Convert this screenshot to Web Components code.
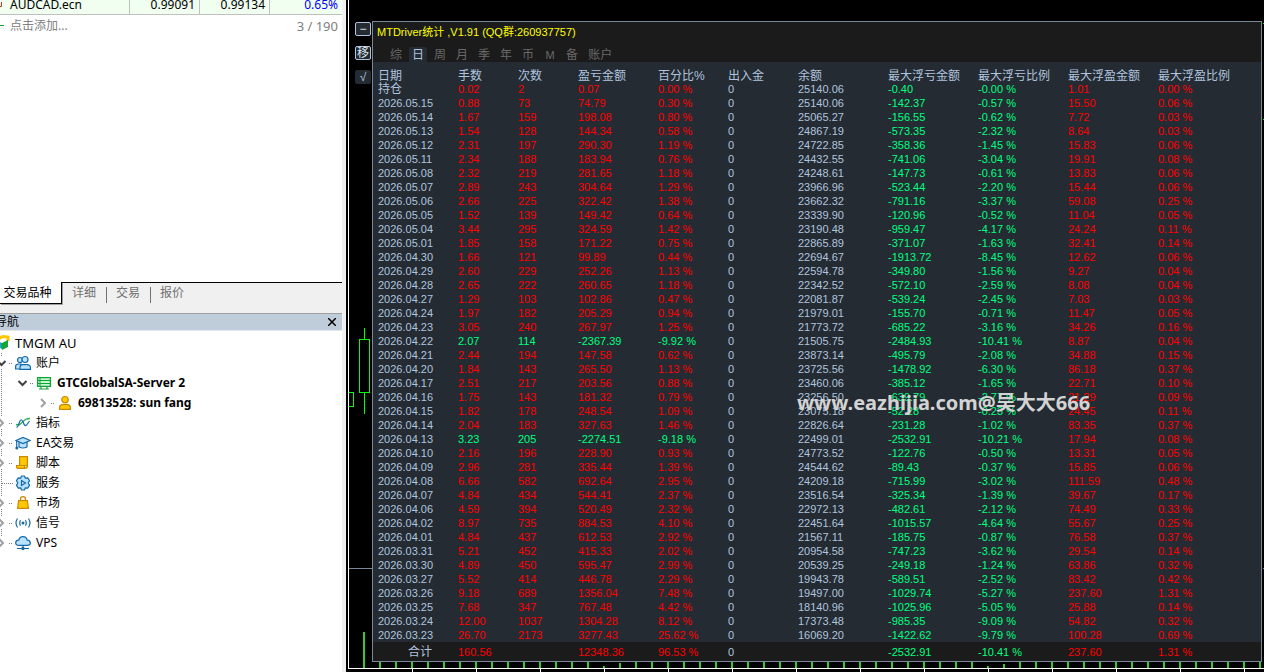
<!DOCTYPE html>
<html lang="zh-CN">
<head>
<meta charset="utf-8">
<title>MTDriver统计</title>
<style>
  html, body { margin: 0; height: 100%; background: #000; }
  body { font: 12px/20px "Noto Sans", "Noto Sans CJK SC", sans-serif; color: #000; }
</style>
</head>
<body>
<trade-terminal></trade-terminal>

<template id="t-terminal">
  <style>
    :host { display: flex; min-height: 100vh; overflow: hidden; }
    side-dock { flex: 0 0 346px; }
    chart-area { flex: 1; min-width: 0; margin-left: 2px; }
  </style>
  <side-dock></side-dock>
  <chart-area></chart-area>
</template>

<template id="t-dock">
  <style>
    :host { display: flex; flex-direction: column; box-sizing: border-box; padding-right: 4px; background: #f0f0f0; }
    market-watch { flex: 0 0 282px; }
    dock-tabs { flex: none; }
    nav-tree { flex: 1; }
  </style>
  <market-watch></market-watch>
  <dock-tabs></dock-tabs>
  <nav-tree></nav-tree>
</template>

<template id="t-market">
  <style>
    :host { display: block; background: #fff; overflow: hidden; }
    table { width: 100%; border-collapse: separate; border-spacing: 0; table-layout: fixed; background: #f0fff0; }
    td { height: 15px; padding: 0 4px 4px; box-sizing: border-box; line-height: 10px; text-align: right; border-bottom: 1px solid #c0c0c0; border-right: 1px solid #c0c0c0; }
    td:first-child { text-align: left; width: 130px; padding-left: 0; }
    td:nth-child(2), td:nth-child(3) { width: 70px; }
    td:last-child { border-right: 0; color: #00f; }
    td svg { display: inline-block; width: 10px; height: 10px; vertical-align: top; }
    .add { display: flex; justify-content: space-between; padding: 0 4px 0 0; height: 22px; align-items: center; color: #808080; }
    .add span { font-size: 13px; }
    button { all: unset; display: flex; align-items: center; cursor: pointer; }
    button svg { width: 10px; height: 10px; }
  </style>
  <table><tbody><tr>
    <td><svg viewBox="0 0 10 10"><path d="M1.500 2V6.500H0" fill="none" stroke="#d03020" stroke-width="1"/></svg>AUDCAD.ecn</td>
    <td>0.99091</td><td>0.99134</td><td>0.65%</td>
  </tr></tbody></table>
  <div class="add">
    <button type="button"><svg viewBox="0 0 10 10" aria-hidden="true"><path d="M0 4.500H4" stroke="#18a030"/></svg>点击添加...</button>
    <span>3 / 190</span>
  </div>
</template>

<template id="t-tabs">
  <style>
    :host { display: block; height: 31px; }
    nav { display: flex; }
    button { font: inherit; margin: 0; border: 0; padding: 0 0 2px; background: none; color: #707070; height: 22px; line-height: 18px; box-sizing: border-box; border-top: 1px solid #000; width: 44px; position: relative; }
    button[aria-selected="true"] { width: 62px; color: #000; background: #fff; border: solid #000; border-width: 0 1px 1px 0; box-shadow: 1px 1px 0 #a0a0a0; padding: 0 6px 0 0; }
    button + button + button::before { content: ""; position: absolute; left: 0; top: 4px; height: 16px; border-left: 1px solid #707070; }
    i { flex: 1; border-top: 1px solid #000; }
  </style>
  <nav role="tablist">
    <button role="tab" aria-selected="true">交易品种</button><button role="tab">详细</button><button role="tab">交易</button><button role="tab">报价</button><i></i>
  </nav>
</template>

<template id="t-nav">
  <style>
    :host { display: block; background: #fff; overflow: hidden; }
    header { display: flex; justify-content: space-between; align-items: center; height: 16px; border-top: 1px solid #a0a0a0; border-bottom: 1px solid #e4e8ec; background: #bfcddb; }
    h2 { margin: 0 0 0 -5px; font: inherit; line-height: 16px; }
    button { all: unset; display: flex; padding: 0 6px; cursor: pointer; }
    button svg { width: 8px; height: 8px; }
    ul { list-style: none; margin: 0 0 0 -6px; padding: 0; }
    .root { padding-top: 2px; }
    .tree { background: repeating-linear-gradient(#808080 0 1px, transparent 1px 2px) 7px 0 / 1px 190px no-repeat; }
  </style>
  <header><h2>导航</h2><button type="button" aria-label="关闭"><svg viewBox="0 0 8 8"><path d="M0 0L8 8M8 0L0 8" stroke="#000" stroke-width="1.500"/></svg></button></header>
  <ul class="root"><tree-item root icon="brand">TMGM AU</tree-item></ul>
  <ul class="tree">
    <tree-item icon="users" open>账户</tree-item>
    <tree-item icon="server" level="2" open strong>GTCGlobalSA-Server 2</tree-item>
    <tree-item icon="user" level="3" strong>69813528: sun fang</tree-item>
    <tree-item icon="wave">指标</tree-item>
    <tree-item icon="cap">EA交易</tree-item>
    <tree-item icon="script">脚本</tree-item>
    <tree-item icon="gear" leaf>服务</tree-item>
    <tree-item icon="bag">市场</tree-item>
    <tree-item icon="signal">信号</tree-item>
    <tree-item icon="cloud">VPS</tree-item>
  </ul>
</template>

<template id="t-item">
  <style>
    :host { display: flex; align-items: center; height: 20px; white-space: nowrap; }
    :host([level="2"]) { padding-left: 21px; }
    :host([level="3"]) { padding-left: 42px; }
    :host([strong]) { font-weight: bold; }
    :host([root]) { font-size: 13px; }
    .toggle { width: 15px; height: 12px; }
    .dots { width: 4px; height: 1px; margin-right: 2px; background: repeating-linear-gradient(90deg, #808080 0 1px, transparent 1px 2px); }
    .icon { width: 16px; height: 16px; margin-right: 5px; }
    :host([root]) .toggle, :host([root]) .dots { display: none; }
    :host([leaf]) .toggle { visibility: hidden; }
    :host([leaf]) .dots { width: 11px; margin-left: -7px; }
  </style>
  <svg class="toggle" viewBox="0 0 15 12"></svg><span class="dots"></span><svg class="icon" viewBox="0 0 16 16" fill="none"></svg><span><slot></slot></span>
</template>

<template id="t-chart">
  <style>
    :host { display: flex; flex-direction: column; position: relative; box-sizing: border-box; padding: 21px 2px 0 0; background: #000; }
    .axis { position: absolute; left: 0; top: 0; bottom: 3px; border-left: 1px solid #fff; }
    .main { display: flex; flex: 1; }
    .rail { flex: 0 0 24px; display: flex; flex-direction: column; align-items: flex-end; gap: 10px; padding: 1px 0 0; box-sizing: border-box; }
    .rail button { width: 16px; height: 14px; box-sizing: border-box; margin: 0 1px 0 0; padding: 0; border: 1px solid #b0c4de; border-radius: 2px; background: #242b33; color: #dde6f0; font: 12px/10px "Liberation Sans", "Noto Sans CJK SC", sans-serif; }
    .rail button.flat { border-color: #242b33; color: #b0c4de; }
    .candles { position: absolute; left: 0; top: 0; width: 24px; height: 668px; }
    .right { position: absolute; right: 0; top: 0; width: 1px; height: 668px; }
    .strip { display: block; width: 100%; height: 10px; }
    .bottom { margin: 0 -2px 0 0; }
    stats-panel { flex: 1; min-width: 0; }
  </style>
  <span class="axis"></span>
  <svg class="candles" viewBox="0 0 24 668" shape-rendering="crispEdges" aria-hidden="true">
    <path d="M16.500 328V339M16.500 393V414M11.500 339.500H21.500V392.500H11.500ZM1 392.500H5.500V406.500H1" fill="none" stroke="#0f0"/>
    <rect x="1" y="568" width="23" height="1" fill="#778899"/>
    <rect x="15" y="632" width="2" height="36" fill="#32cd32"/>
  </svg>
  <svg class="right" viewBox="0 0 1 668" shape-rendering="crispEdges" aria-hidden="true"><path d="M0 23.500H1M0 119.500H1" stroke="#0f0"/><path d="M0 568.500H1" stroke="#778899"/></svg>
  <div class="main">
    <div class="rail"><button type="button">−</button><button type="button">移</button><button type="button" class="flat">√</button></div>
    <stats-panel></stats-panel>
  </div>
  <div class="bottom">
    <svg class="strip" shape-rendering="crispEdges" aria-hidden="true">
      <defs>
        <pattern id="bars" width="16" height="10" patternUnits="userSpaceOnUse"><rect x="15" width="1" height="6" fill="#32cd32"/><rect x="0" width="1" height="6" fill="#32cd32"/></pattern>
        <pattern id="ticks" width="64" height="10" patternUnits="userSpaceOnUse"><rect x="0" y="7" width="1" height="3" fill="#fff"/></pattern>
      </defs>
      <rect x="15" width="100%" height="6" fill="url(#bars)"/>
      <path d="M255 0h2v4h-2zM271 0h2v1h-2zM639 0h2v4h-2zM655 0h2v2h-2z" fill="#000"/>
      <rect y="6" width="100%" height="1" fill="#fff"/>
      <rect x="1" y="0" width="100%" height="10" fill="url(#ticks)"/>
    </svg>
  </div>
</template>

<template id="t-panel">
  <style>
    :host { display: flex; flex-direction: column; position: relative; box-sizing: border-box; border: 1px solid #778899; background: #242b33; font-family: "Liberation Sans", "Noto Sans CJK SC", sans-serif; font-size: 11px; }
    header { background: #1b1b1b; height: 40px; }
    h1 { margin: 0 0 5px; padding-left: 4px; font: inherit; line-height: 20px; color: #ff0; }
    nav { display: flex; gap: 4px; padding-left: 14px; }
    nav button { min-width: 18px; height: 15px; box-sizing: border-box; padding: 2px 3px 0; border: 0; margin: 0; background: none; color: #696969; font: 12px/13px "Liberation Sans", "Noto Sans CJK SC", sans-serif; white-space: nowrap; border-radius: 2px 2px 0 0; }
    nav button[aria-selected="true"] { background: #242b33; color: #b0c4de; }
    nav button.latin { font-size: 11px; }
    .mark { position: absolute; left: 424px; top: 368px; font: bold 20px/26px "Noto Sans", "Noto Sans CJK SC", sans-serif; color: #d3d3d3; white-space: nowrap; pointer-events: none; }
  </style>
  <header>
    <h1>MTDriver统计 ,V1.91 (QQ群:260937757)</h1>
    <nav role="tablist"><button role="tab">综</button><button role="tab" aria-selected="true">日</button><button role="tab">周</button><button role="tab">月</button><button role="tab">季</button><button role="tab">年</button><button role="tab">币</button><button role="tab" class="latin">M</button><button role="tab">备</button><button role="tab">账户</button></nav>
  </header>
  <stats-table></stats-table>
  <div class="mark">www.eazhijia.com@吴大大666</div>
</template>

<template id="t-table">
  <style>
    :host { display: block; color: #b0c4de; }
    table { width: 100%; border-collapse: collapse; table-layout: fixed; line-height: 14px; }
    th, td { padding: 0 0 0 5px; text-align: left; font-weight: normal; white-space: nowrap; height: 14px; box-sizing: border-box; }
    thead th { height: 20px; vertical-align: bottom; font-size: 12px; line-height: 12px; }
    th.cjk { font-size: 12px; }
    tfoot tr { background: #1b1b1b; }
    tfoot th, tfoot td { height: 19px; }
    tfoot th { padding-left: 35px; }
    .up { color: #f00; }
    .down { color: #00ff7f; }
    .w60 { width: 60px; } .w70 { width: 70px; } .w80 { width: 80px; } .w90 { width: 90px; }
  </style>
  <table>
    <colgroup><col class="w80"><col class="w60"><col class="w60"><col class="w80"><col class="w70"><col class="w70"><col class="w90"><col class="w90"><col class="w90"><col class="w90"><col></colgroup>
    <thead><tr></tr></thead><tbody></tbody><tfoot></tfoot>
  </table>
</template>

<script>
const ICONS = {
  brand: '<path d="M2 5L9 1.500L14 2V6" stroke="#ffc800" stroke-width="3"/><path d="M4 6L8 8V14L4 12Z" fill="#2b9fe0"/><path d="M7 8.500L14 5V12L8 15Z" fill="#10a838"/>',
  users: '<g fill="#b9e2ff" stroke="#1569a8" stroke-width="1.200"><circle cx="5" cy="5" r="2.500"/><path d="M.600 14V11.500Q.600 9 3.500 9H6V14Z"/><circle cx="10" cy="4.500" r="3"/><path d="M5 14.400V12.500Q5 9.600 8 9.600H12Q15.400 9.600 15.400 12.500V14.400Z"/></g>',
  server: '<path d="M1.600 2.600H14.400V11.400H1.600Z" fill="#c9f7d2" stroke="#12a336" stroke-width="1.300"/><path d="M2 5.500H14M2 8.500H14M3 14H13M5 11V14M11 11V14" stroke="#12a336" stroke-width="1.200"/><path d="M3 4H5M3 7H5M3 10H5" stroke="#12a336"/>',
  user: '<g fill="#ffc800" stroke="#c98a00" stroke-width="1.200"><circle cx="8" cy="4.700" r="3.200"/><path d="M2.600 14.400V12.500Q2.600 9.600 5.500 9.600H10.500Q13.400 9.600 13.400 12.500V14.400Z"/></g>',
  wave: '<path d="M1 9.500L4 10L11 4L15 3.500" stroke="#25b04a" stroke-width="1.300"/><path d="M1.500 12.500Q3 12 4.500 7Q6 2.500 8 7Q10 12.500 12 9.500L14.500 6" stroke="#1569a8" stroke-width="1.200"/>',
  cap: '<g stroke="#1569a8" stroke-width="1.200"><path d="M4 7V12Q8 14 12 12V7" fill="#b9e2ff"/><path d="M1 5.500L8 2.500L15 5.500L8 8.500Z" fill="#b9e2ff"/><path d="M1.700 6V12"/></g><circle cx="1.800" cy="13" r="1.500" fill="#1569a8"/>',
  script: '<path d="M4.600 1.600H12.400V10.500H4.600Z" fill="#ffc800" stroke="#c98a00" stroke-width="1.200"/><path d="M1.600 10.500H9.500V13.400H3Q1.600 13.400 1.600 12.200ZM9.500 13.400Q12.400 13.400 12.400 11.500V9" fill="#ffc800" stroke="#c98a00" stroke-width="1.200"/>',
  gear: '<path d="M6.500 1H9.500L10.300 3.200L12.700 2.900L14.500 5.600L13.200 8L14.500 10.400L12.700 13.100L10.300 12.800L9.500 15H6.500L5.700 12.800L3.300 13.100L1.500 10.400L2.800 8L1.500 5.600L3.300 2.900L5.700 3.200Z" fill="#b9e2ff" stroke="#1569a8" stroke-width="1.200" stroke-linejoin="round"/><path d="M6.500 5.500L10.500 8L6.500 10.500Z" fill="#b9e2ff" stroke="#1569a8" stroke-width="1.200"/>',
  bag: '<path d="M5.500 6V4Q5.500 1.600 8 1.600T10.500 4V6" stroke="#c98a00" stroke-width="1.400"/><path d="M3.600 5.600H12.400L13.400 13.400H2.600Z" fill="#ffc800" stroke="#c98a00" stroke-width="1.200"/>',
  signal: '<circle cx="8" cy="8" r="1.500" fill="#1569a8"/><path d="M5.500 5.200Q4 8 5.500 10.800M10.500 5.200Q12 8 10.500 10.800M2.500 3.500Q-.500 8 2.500 12.500M13.500 3.500Q16.500 8 13.500 12.500" stroke="#1569a8" stroke-width="1.200"/>',
  cloud: '<path d="M4 10.400Q.700 10.400 .700 7.800T3.800 5.200Q4.500 1.600 8 1.600T12.200 5.200Q15.300 5.300 15.300 7.900T12 10.400Z" fill="#b9e2ff" stroke="#1569a8" stroke-width="1.200"/><path d="M8 10.500V13M2 13.500H14" stroke="#1569a8" stroke-width="1.200"/><circle cx="8" cy="13.500" r="1.700" fill="#1569a8"/>'
};

const HEAD = ['日期','手数','次数','盈亏金额','百分比%','出入金','余额','最大浮亏金额','最大浮亏比例','最大浮盈金额','最大浮盈比例'];
/* date | lots | trades | profit | percent | balance | max loss | loss ratio | max gain | gain ratio */
const DATA = `持仓|0.02|2|0.07|0.00|25140.06|-0.40|-0.00|1.01|0.00
2026.05.15|0.88|73|74.79|0.30|25140.06|-142.37|-0.57|15.50|0.06
2026.05.14|1.67|159|198.08|0.80|25065.27|-156.55|-0.62|7.72|0.03
2026.05.13|1.54|128|144.34|0.58|24867.19|-573.35|-2.32|8.64|0.03
2026.05.12|2.31|197|290.30|1.19|24722.85|-358.36|-1.45|15.83|0.06
2026.05.11|2.34|188|183.94|0.76|24432.55|-741.06|-3.04|19.91|0.08
2026.05.08|2.32|219|281.65|1.18|24248.61|-147.73|-0.61|13.83|0.06
2026.05.07|2.89|243|304.64|1.29|23966.96|-523.44|-2.20|15.44|0.06
2026.05.06|2.66|225|322.42|1.38|23662.32|-791.16|-3.37|59.08|0.25
2026.05.05|1.52|139|149.42|0.64|23339.90|-120.96|-0.52|11.04|0.05
2026.05.04|3.44|295|324.59|1.42|23190.48|-959.47|-4.17|24.24|0.11
2026.05.01|1.85|158|171.22|0.75|22865.89|-371.07|-1.63|32.41|0.14
2026.04.30|1.66|121|99.89|0.44|22694.67|-1913.72|-8.45|12.62|0.06
2026.04.29|2.60|229|252.26|1.13|22594.78|-349.80|-1.56|9.27|0.04
2026.04.28|2.65|222|260.65|1.18|22342.52|-572.10|-2.59|8.08|0.04
2026.04.27|1.29|103|102.86|0.47|22081.87|-539.24|-2.45|7.03|0.03
2026.04.24|1.97|182|205.29|0.94|21979.01|-155.70|-0.71|11.47|0.05
2026.04.23|3.05|240|267.97|1.25|21773.72|-685.22|-3.16|34.26|0.16
2026.04.22|2.07|114|-2367.39|-9.92|21505.75|-2484.93|-10.41|8.87|0.04
2026.04.21|2.44|194|147.58|0.62|23873.14|-495.79|-2.08|34.88|0.15
2026.04.20|1.84|143|265.50|1.13|23725.56|-1478.92|-6.30|86.18|0.37
2026.04.17|2.51|217|203.56|0.88|23460.06|-385.12|-1.65|22.71|0.10
2026.04.16|1.75|143|181.32|0.79|23256.50|-639.79|-2.77|21.29|0.09
2026.04.15|1.82|178|248.54|1.09|23075.18|-52.28|-0.23|24.45|0.11
2026.04.14|2.04|183|327.63|1.46|22826.64|-231.28|-1.02|83.35|0.37
2026.04.13|3.23|205|-2274.51|-9.18|22499.01|-2532.91|-10.21|17.94|0.08
2026.04.10|2.16|196|228.90|0.93|24773.52|-122.76|-0.50|13.31|0.05
2026.04.09|2.96|281|335.44|1.39|24544.62|-89.43|-0.37|15.85|0.06
2026.04.08|6.66|582|692.64|2.95|24209.18|-715.99|-3.02|111.59|0.48
2026.04.07|4.84|434|544.41|2.37|23516.54|-325.34|-1.39|39.67|0.17
2026.04.06|4.59|394|520.49|2.32|22972.13|-482.61|-2.12|74.49|0.33
2026.04.02|8.97|735|884.53|4.10|22451.64|-1015.57|-4.64|55.67|0.25
2026.04.01|4.84|437|612.53|2.92|21567.11|-185.75|-0.87|76.58|0.37
2026.03.31|5.21|452|415.33|2.02|20954.58|-747.23|-3.62|29.54|0.14
2026.03.30|4.89|450|595.47|2.99|20539.25|-249.18|-1.24|63.86|0.32
2026.03.27|5.52|414|446.78|2.29|19943.78|-589.51|-2.52|83.42|0.42
2026.03.26|9.18|689|1356.04|7.48|19497.00|-1029.74|-5.27|237.60|1.31
2026.03.25|7.68|347|767.48|4.42|18140.96|-1025.96|-5.05|25.88|0.14
2026.03.24|12.00|1037|1304.28|8.12|17373.48|-985.35|-9.09|54.82|0.32
2026.03.23|26.70|2173|3277.43|25.62|16069.20|-1422.62|-9.79|100.28|0.69`;
const TOTAL = '合计|160.56||12348.36|96.53||-2532.91|-10.41|237.60|1.31';

function rowHtml(line) {
  const [date, lots, count, profit, pct, balance, loss, lossPct, gain, gainPct] = line.split('|');
  const tone = profit.startsWith('-') ? 'down' : 'up';
  const cell = (text, cls = '') => `<td class="${cls}">${text}</td>`;
  return `<tr><th scope="row" class="${/^\d/.test(date) ? '' : 'cjk'}">${date}</th>` +
    cell(lots, tone) + cell(count, tone) + cell(profit, tone) + cell(pct + ' %', tone) +
    cell('0') + cell(balance) + cell(loss, 'down') + cell(lossPct + ' %', 'down') +
    cell(gain, 'up') + cell(gainPct + ' %', 'up') + '</tr>';
}

class TemplateElement extends HTMLElement {
  constructor() {
    super();
    const tpl = document.getElementById(this.constructor.template);
    this.attachShadow({ mode: 'open' }).append(document.importNode(tpl.content, true));
  }
}
const define = (name, template, Base = TemplateElement) =>
  customElements.define(name, class extends Base { static template = template; });

class TreeItemBase extends TemplateElement {
  connectedCallback() {
    this.setAttribute('role', 'treeitem');
    this.shadowRoot.querySelector('.icon').innerHTML = ICONS[this.getAttribute('icon')] || '';
    const path = this.hasAttribute('open')
      ? '<path d="M3.500 4L7.500 8L11.500 4" stroke="#404040" stroke-width="2" fill="none"/>'
      : '<path d="M5 2L9 6L5 10" stroke="#a0a0a0" stroke-width="2" fill="none"/>';
    this.shadowRoot.querySelector('.toggle').innerHTML = '<rect x="2" width="11" height="12" fill="#fff"/>' + path;
  }
}

class StatsTableBase extends TemplateElement {
  connectedCallback() {
    const root = this.shadowRoot;
    root.querySelector('thead tr').innerHTML = HEAD.map(h => `<th scope="col">${h}</th>`).join('');
    root.querySelector('tbody').innerHTML = DATA.split('\n').map(rowHtml).join('');
    root.querySelector('tfoot').innerHTML = rowHtml(TOTAL);
  }
}

define('tree-item', 't-item', TreeItemBase);
define('stats-table', 't-table', StatsTableBase);
define('stats-panel', 't-panel');
define('market-watch', 't-market');
define('dock-tabs', 't-tabs');
define('nav-tree', 't-nav');
define('side-dock', 't-dock');
define('chart-area', 't-chart');
define('trade-terminal', 't-terminal');
</script>
</body>
</html>
